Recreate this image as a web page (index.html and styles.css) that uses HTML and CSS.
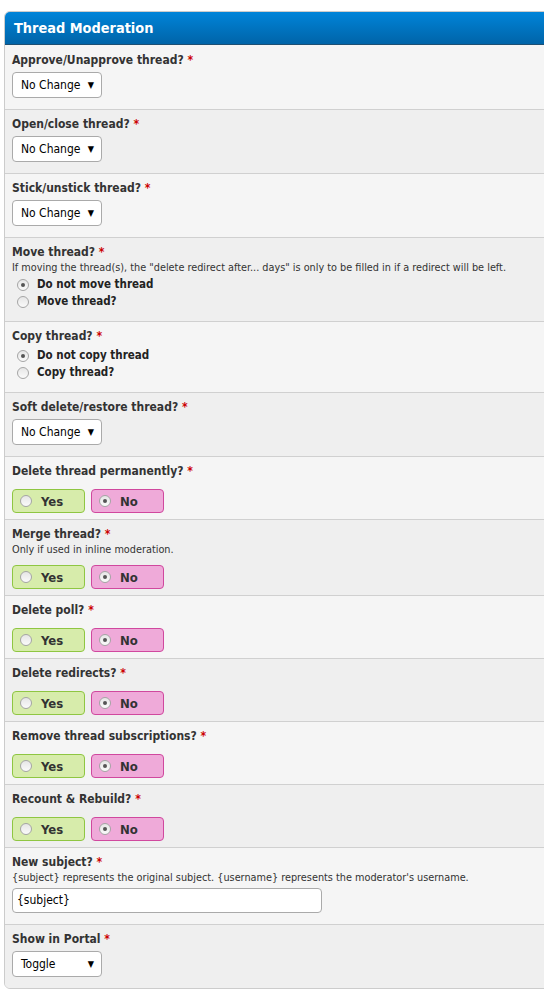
FILE: index.html
```html
<!DOCTYPE html>
<html>
<head>
<meta charset="utf-8">
<title>Thread Moderation</title>
<link rel="stylesheet" href="styles.css">
</head>
<body>
<div class="panel">
  <div class="head">Thread Moderation</div>

  <div class="row light">
    <div class="label">Approve/Unapprove thread? <span class="req">*</span></div>
    <div class="select"><span class="val">No Change</span><span class="arrow">▼</span></div>
  </div>

  <div class="row dark">
    <div class="label">Open/close thread? <span class="req">*</span></div>
    <div class="select"><span class="val">No Change</span><span class="arrow">▼</span></div>
  </div>

  <div class="row light">
    <div class="label">Stick/unstick thread? <span class="req">*</span></div>
    <div class="select"><span class="val">No Change</span><span class="arrow">▼</span></div>
  </div>

  <div class="row dark">
    <div class="label">Move thread? <span class="req">*</span></div>
    <div class="desc">If moving the thread(s), the "delete redirect after... days" is only to be filled in if a redirect will be left.</div>
    <div class="radios">
      <div class="opt"><span class="radio on"></span>Do not move thread</div>
      <div class="opt"><span class="radio"></span>Move thread?</div>
    </div>
  </div>

  <div class="row light">
    <div class="label">Copy thread? <span class="req">*</span></div>
    <div class="radios">
      <div class="opt"><span class="radio on"></span>Do not copy thread</div>
      <div class="opt"><span class="radio"></span>Copy thread?</div>
    </div>
  </div>

  <div class="row dark">
    <div class="label">Soft delete/restore thread? <span class="req">*</span></div>
    <div class="select"><span class="val">No Change</span><span class="arrow">▼</span></div>
  </div>

  <div class="row light">
    <div class="label">Delete thread permanently? <span class="req">*</span></div>
    <div class="yesno"><div class="btn yes"><span class="radio"></span>Yes</div><div class="btn no"><span class="radio on"></span>No</div></div>
  </div>

  <div class="row dark">
    <div class="label">Merge thread? <span class="req">*</span></div>
    <div class="desc">Only if used in inline moderation.</div>
    <div class="yesno"><div class="btn yes"><span class="radio"></span>Yes</div><div class="btn no"><span class="radio on"></span>No</div></div>
  </div>

  <div class="row light">
    <div class="label">Delete poll? <span class="req">*</span></div>
    <div class="yesno"><div class="btn yes"><span class="radio"></span>Yes</div><div class="btn no"><span class="radio on"></span>No</div></div>
  </div>

  <div class="row dark">
    <div class="label">Delete redirects? <span class="req">*</span></div>
    <div class="yesno"><div class="btn yes"><span class="radio"></span>Yes</div><div class="btn no"><span class="radio on"></span>No</div></div>
  </div>

  <div class="row light">
    <div class="label">Remove thread subscriptions? <span class="req">*</span></div>
    <div class="yesno"><div class="btn yes"><span class="radio"></span>Yes</div><div class="btn no"><span class="radio on"></span>No</div></div>
  </div>

  <div class="row dark">
    <div class="label">Recount &amp; Rebuild? <span class="req">*</span></div>
    <div class="yesno"><div class="btn yes"><span class="radio"></span>Yes</div><div class="btn no"><span class="radio on"></span>No</div></div>
  </div>

  <div class="row light">
    <div class="label">New subject? <span class="req">*</span></div>
    <div class="desc">{subject} represents the original subject. {username} represents the moderator's username.</div>
    <div class="textbox">{subject}</div>
  </div>

  <div class="row dark">
    <div class="label">Show in Portal <span class="req">*</span></div>
    <div class="select"><span class="val">Toggle</span><span class="arrow">▼</span></div>
  </div>
</div>
</body>
</html>
```
FILE: styles.css
```css
html, body {
  margin: 0;
  padding: 0;
  background: #fff;
  overflow-x: hidden;
}
body {
  font-family: "DejaVu Sans Condensed", "DejaVu Sans", sans-serif;
  color: #333;
}
.panel {
  margin: 11px 0 0 4px;
  width: 580px;
  border: 1px solid #ccc;
  border-radius: 6px;
  overflow: hidden;
  background: #f4f4f4;
}
.head {
  height: 32px;
  line-height: 32px;
  padding-left: 9px;
  background: linear-gradient(#0084d9, #0064a8);
  border-bottom: 1px solid #1d4f73;
  color: #fff;
  font-weight: bold;
  font-size: 14.4px;
}
.row {
  padding: 6px 7px 11px;
  border-top: 1px solid #d0d0d0;
}
.head + .row { border-top: 0; padding-top: 7px; }
.row.light { background: #f5f5f5; }
.row.dark { background: #efefef; }
.label {
  font-weight: bold;
  font-size: 12px;
  line-height: 17px;
  color: #333;
}
.req { color: #cc0000; }
.desc {
  font-size: 10.8px;
  line-height: 13px;
  color: #333;
}
.select {
  margin-top: 3px;
  width: 90px;
  height: 26px;
  box-sizing: border-box;
  border: 1px solid #aaa;
  border-radius: 4px;
  background: #fff;
  display: flex;
  align-items: center;
  justify-content: space-between;
  padding: 0 7px 0 8px;
  font-size: 12px;
  color: #000;
}
.arrow { font-size: 9px; }
.radios {
  margin-top: 2px;
}
.opt {
  display: flex;
  align-items: center;
  font-weight: bold;
  font-size: 11.5px;
  line-height: 17px;
  color: #222;
}
.opt .radio { margin: 0 8px 0 5px; }
.radio {
  display: inline-block;
  width: 12px;
  height: 12px;
  box-sizing: border-box;
  border-radius: 50%;
  border: 1px solid #a5a5a5;
  background: linear-gradient(#e6e6e6, #fafafa);
  position: relative;
  flex: none;
}
.radio.on::after {
  content: "";
  position: absolute;
  left: 3px;
  top: 3px;
  width: 4px;
  height: 4px;
  border-radius: 50%;
  background: #555;
}
.yesno {
  display: flex;
  gap: 6px;
  margin-top: 9px;
  margin-bottom: -5px;
}
.btn {
  width: 73px;
  height: 24px;
  box-sizing: border-box;
  border-radius: 4px;
  display: flex;
  align-items: center;
  font-weight: bold;
  font-size: 13px;
  color: #333;
}
.btn .radio { margin: 0 9px 0 7px; }
.btn.yes {
  background: #d7ecab;
  border: 1px solid #8fc642;
}
.btn.no {
  background: #efaad9;
  border: 1px solid #d0489e;
}
.textbox {
  margin-top: 4px;
  width: 310px;
  height: 25px;
  box-sizing: border-box;
  border: 1px solid #aaa;
  border-radius: 4px;
  background: #fff;
  padding: 0 4px;
  line-height: 23px;
  font-size: 12px;
  color: #000;
}
```
